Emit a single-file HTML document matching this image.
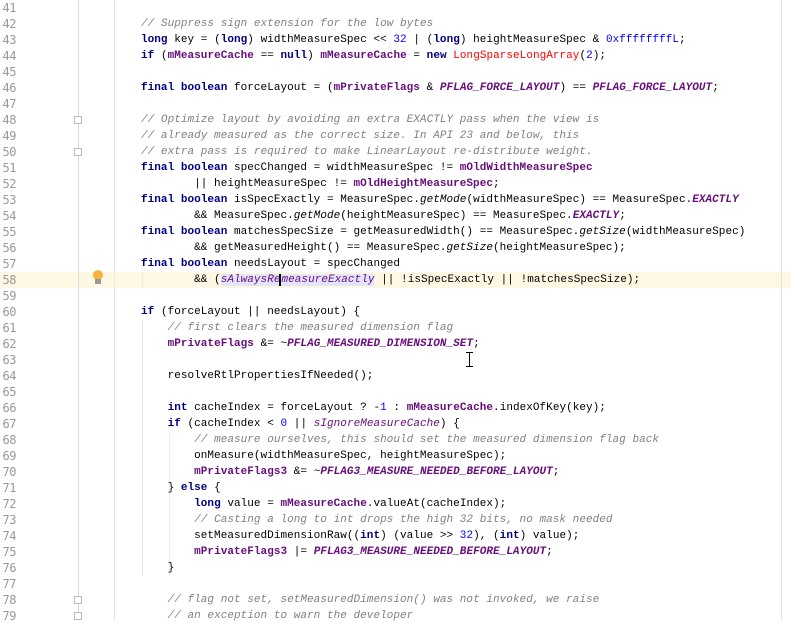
<!DOCTYPE html>
<html><head><meta charset="utf-8"><style>
body{margin:0;width:791px;height:621px;overflow:hidden;background:#fff;position:relative;font-family:"Liberation Mono",monospace;font-size:11px}
.ln{position:absolute;left:-1px;width:17px;text-align:right;color:#999;font-size:12px;font-family:"DejaVu Sans Mono",monospace;height:16px;line-height:16px;letter-spacing:-0.5px}
.l{position:absolute;left:141px;height:16px;line-height:16px;white-space:pre;color:#000;letter-spacing:0.04px}
.hl{position:absolute;left:0;width:791px;height:16px;background:#fdf8e4}
.k{color:#000080;font-weight:bold}
.f{color:#660e7a;font-weight:bold}
.c{color:#808080;font-style:italic}
.s{color:#660e7a;font-weight:bold;font-style:italic}
.si{color:#660e7a;font-style:italic}
.i{font-style:italic}
.n{color:#0000ff}
.r{color:#ff0000}
.vl{position:absolute;top:0;height:621px;width:1px}
.fold{position:absolute;left:74px;width:8px;height:8px;border:1px solid #bbb;background:#fff;box-sizing:border-box}
</style></head><body>
<div class="hl" style="top:272px"></div>
<div class="vl" style="left:78px;background:#ddd"></div>
<div class="vl" style="left:114px;background:#e6e6e6"></div>
<div class="vl" style="left:142px;top:320px;height:256px;background:#e6e6e6"></div>
<div class="vl" style="left:142px;top:272px;height:16px;background:#e6e6e6"></div>
<div class="vl" style="left:169px;top:432px;height:144px;background:#eee"></div>
<div class="vl" style="left:781px;background:#e4e4e4"></div>
<div class="fold" style="top:116px"></div>
<div class="fold" style="top:148px"></div>
<div class="fold" style="top:596px"></div>
<div class="fold" style="top:612px"></div>
<div style="position:absolute;left:93px;top:270px;width:10px;height:10px;border-radius:50%;background:#f7b33a"></div>
<div style="position:absolute;left:95px;top:279px;width:6px;height:5px;background:#999"></div>
<div style="position:absolute;left:469px;top:352px;width:1px;height:15px;background:#000"></div>
<div style="position:absolute;left:466px;top:352px;width:7px;height:1px;background:#000"></div>
<div style="position:absolute;left:466px;top:366px;width:7px;height:1px;background:#000"></div>

<div class="ln" style="top:0">41</div><div class="ln" style="top:16px">42</div><div class="ln" style="top:32px">43</div><div class="ln" style="top:48px">44</div><div class="ln" style="top:64px">45</div><div class="ln" style="top:80px">46</div><div class="ln" style="top:96px">47</div><div class="ln" style="top:112px">48</div><div class="ln" style="top:128px">49</div><div class="ln" style="top:144px">50</div><div class="ln" style="top:160px">51</div><div class="ln" style="top:176px">52</div><div class="ln" style="top:192px">53</div><div class="ln" style="top:208px">54</div><div class="ln" style="top:224px">55</div><div class="ln" style="top:240px">56</div><div class="ln" style="top:256px">57</div><div class="ln" style="top:272px">58</div><div class="ln" style="top:288px">59</div><div class="ln" style="top:304px">60</div><div class="ln" style="top:320px">61</div><div class="ln" style="top:336px">62</div><div class="ln" style="top:352px">63</div><div class="ln" style="top:368px">64</div><div class="ln" style="top:384px">65</div><div class="ln" style="top:400px">66</div><div class="ln" style="top:416px">67</div><div class="ln" style="top:432px">68</div><div class="ln" style="top:448px">69</div><div class="ln" style="top:464px">70</div><div class="ln" style="top:480px">71</div><div class="ln" style="top:496px">72</div><div class="ln" style="top:512px">73</div><div class="ln" style="top:528px">74</div><div class="ln" style="top:544px">75</div><div class="ln" style="top:560px">76</div><div class="ln" style="top:576px">77</div><div class="ln" style="top:592px">78</div><div class="ln" style="top:608px">79</div>

<div class="l" style="top:16px"><span class="c">// Suppress sign extension for the low bytes</span></div>
<div class="l" style="top:32px"><span class="k">long</span> key = (<span class="k">long</span>) widthMeasureSpec &lt;&lt; <span class="n">32</span> | (<span class="k">long</span>) heightMeasureSpec &amp; <span class="n">0xffffffffL</span>;</div>
<div class="l" style="top:48px"><span class="k">if</span> (<span class="f">mMeasureCache</span> == <span class="k">null</span>) <span class="f">mMeasureCache</span> = <span class="k">new</span> <span class="r">LongSparseLongArray</span>(<span class="n">2</span>);</div>
<div class="l" style="top:80px"><span class="k">final boolean</span> forceLayout = (<span class="f">mPrivateFlags</span> &amp; <span class="s">PFLAG_FORCE_LAYOUT</span>) == <span class="s">PFLAG_FORCE_LAYOUT</span>;</div>
<div class="l" style="top:112px"><span class="c">// Optimize layout by avoiding an extra EXACTLY pass when the view is</span></div>
<div class="l" style="top:128px"><span class="c">// already measured as the correct size. In API 23 and below, this</span></div>
<div class="l" style="top:144px"><span class="c">// extra pass is required to make LinearLayout re-distribute weight.</span></div>
<div class="l" style="top:160px"><span class="k">final boolean</span> specChanged = widthMeasureSpec != <span class="f">mOldWidthMeasureSpec</span></div>
<div class="l" style="top:176px">        || heightMeasureSpec != <span class="f">mOldHeightMeasureSpec</span>;</div>
<div class="l" style="top:192px"><span class="k">final boolean</span> isSpecExactly = MeasureSpec.<span class="i">getMode</span>(widthMeasureSpec) == MeasureSpec.<span class="s">EXACTLY</span></div>
<div class="l" style="top:208px">        &amp;&amp; MeasureSpec.<span class="i">getMode</span>(heightMeasureSpec) == MeasureSpec.<span class="s">EXACTLY</span>;</div>
<div class="l" style="top:224px"><span class="k">final boolean</span> matchesSpecSize = getMeasuredWidth() == MeasureSpec.<span class="i">getSize</span>(widthMeasureSpec)</div>
<div class="l" style="top:240px">        &amp;&amp; getMeasuredHeight() == MeasureSpec.<span class="i">getSize</span>(heightMeasureSpec);</div>
<div class="l" style="top:256px"><span class="k">final boolean</span> needsLayout = specChanged</div>
<div class="l" style="top:272px">        &amp;&amp; (<span class="si" style="background:#e4e4ff">sAlwaysRe<span style="border-left:2px solid #000;margin-left:-1px">m</span>easureExactly</span> || !isSpecExactly || !matchesSpecSize);</div>
<div class="l" style="top:304px"><span class="k">if</span> (forceLayout || needsLayout) {</div>
<div class="l" style="top:320px">    <span class="c">// first clears the measured dimension flag</span></div>
<div class="l" style="top:336px">    <span class="f">mPrivateFlags</span> &amp;= ~<span class="s">PFLAG_MEASURED_DIMENSION_SET</span>;</div>
<div class="l" style="top:368px">    resolveRtlPropertiesIfNeeded();</div>
<div class="l" style="top:400px">    <span class="k">int</span> cacheIndex = forceLayout ? -<span class="n">1</span> : <span class="f">mMeasureCache</span>.indexOfKey(key);</div>
<div class="l" style="top:416px">    <span class="k">if</span> (cacheIndex &lt; <span class="n">0</span> || <span class="si">sIgnoreMeasureCache</span>) {</div>
<div class="l" style="top:432px">        <span class="c">// measure ourselves, this should set the measured dimension flag back</span></div>
<div class="l" style="top:448px">        onMeasure(widthMeasureSpec, heightMeasureSpec);</div>
<div class="l" style="top:464px">        <span class="f">mPrivateFlags3</span> &amp;= ~<span class="s">PFLAG3_MEASURE_NEEDED_BEFORE_LAYOUT</span>;</div>
<div class="l" style="top:480px">    } <span class="k">else</span> {</div>
<div class="l" style="top:496px">        <span class="k">long</span> value = <span class="f">mMeasureCache</span>.valueAt(cacheIndex);</div>
<div class="l" style="top:512px">        <span class="c">// Casting a long to int drops the high 32 bits, no mask needed</span></div>
<div class="l" style="top:528px">        setMeasuredDimensionRaw((<span class="k">int</span>) (value &gt;&gt; <span class="n">32</span>), (<span class="k">int</span>) value);</div>
<div class="l" style="top:544px">        <span class="f">mPrivateFlags3</span> |= <span class="s">PFLAG3_MEASURE_NEEDED_BEFORE_LAYOUT</span>;</div>
<div class="l" style="top:560px">    }</div>
<div class="l" style="top:592px">    <span class="c">// flag not set, setMeasuredDimension() was not invoked, we raise</span></div>
<div class="l" style="top:608px">    <span class="c">// an exception to warn the developer</span></div>
</body></html>
